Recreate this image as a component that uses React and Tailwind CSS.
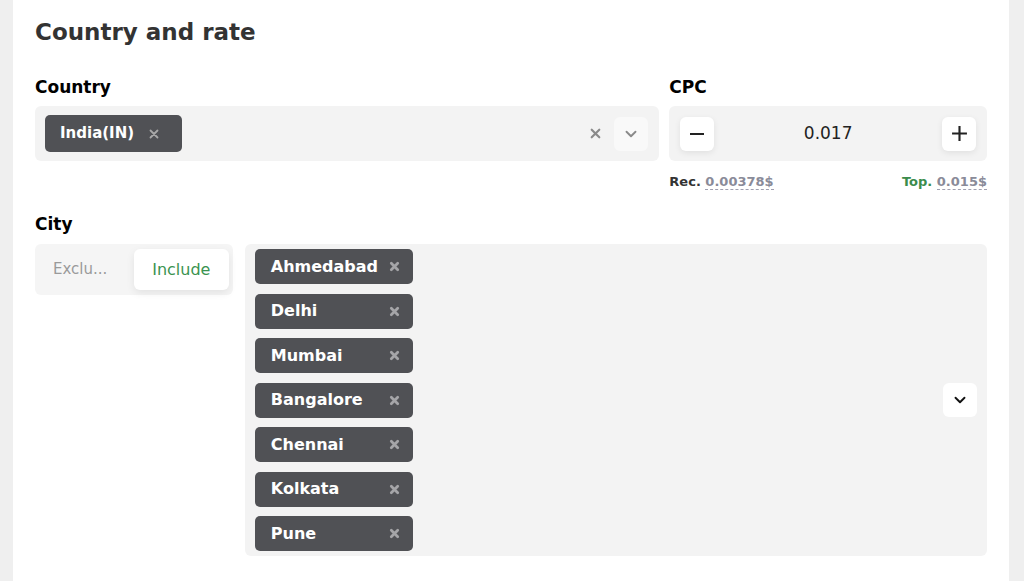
import React from 'react';

const CITIES = ['Ahmedabad', 'Delhi', 'Mumbai', 'Bangalore', 'Chennai', 'Kolkata', 'Pune'];

function Chevron({ className }) {
  return (
    <svg viewBox="0 0 24 24" className={className} fill="none" stroke="currentColor" strokeWidth="2.5" strokeLinecap="round" strokeLinejoin="round">
      <path d="M6 9l6 6 6-6" />
    </svg>
  );
}

function Cross({ className, width = 2 }) {
  return (
    <svg viewBox="0 0 12 12" className={className} fill="none" stroke="currentColor" strokeWidth={width} strokeLinecap="round">
      <path d="M2.5 2.5l7 7M9.5 2.5l-7 7" />
    </svg>
  );
}

export default function App() {
  return (
    <div className="w-[1024px] h-[581px] bg-[#efefef] overflow-hidden" style={{ fontFamily: '"DejaVu Sans", sans-serif' }}>
      <div className="ml-[13px] w-[996px] h-full bg-white px-[22px] pt-[16px]">
        <h1 className="text-[23px] font-bold text-[#333] leading-[32px]">Country and rate</h1>

        <div className="mt-[27px] flex gap-[10px]">
          {/* Country */}
          <div className="w-[625px]">
            <div className="text-[17px] font-bold text-black leading-[24px] h-[24px]">Country</div>
            <div className="mt-[7px] h-[55px] bg-[#f3f3f3] rounded-[6px] flex items-center pl-[10px] pr-[11px]">
              <div className="h-[37px] pl-[15px] pr-[22px] bg-[#505155] rounded-[5px] flex items-center gap-[14px]">
                <span className="text-white text-[15px] font-bold">India(IN)</span>
                <Cross className="w-[12px] h-[12px] text-[#a8a8a8]" width={1.8} />
              </div>
              <div className="flex-1" />
              <Cross className="w-[13px] h-[13px] text-[#8a8a8a] mr-[12px]" width={2} />
              <div className="w-[34px] h-[34px] bg-[#f9f9f9] rounded-[6px] flex items-center justify-center">
                <Chevron className="w-[18px] h-[18px] text-[#8a8a8a]" />
              </div>
            </div>
          </div>

          {/* CPC */}
          <div className="w-[318px]">
            <div className="text-[17px] font-bold text-black leading-[24px] h-[24px]">CPC</div>
            <div className="mt-[7px] h-[55px] bg-[#f3f3f3] rounded-[6px] flex items-center px-[11px]">
              <div className="w-[34px] h-[34px] bg-white rounded-[6px] shadow-[0_2px_6px_rgba(0,0,0,0.08)] flex items-center justify-center">
                <div className="w-[14px] h-[2px] bg-[#222]" />
              </div>
              <div className="flex-1 text-center text-[17px] text-[#222]">0.017</div>
              <div className="w-[34px] h-[34px] bg-white rounded-[6px] shadow-[0_2px_6px_rgba(0,0,0,0.08)] flex items-center justify-center">
                <svg viewBox="0 0 16 16" className="w-[17px] h-[17px]" stroke="#222" strokeWidth="2">
                  <path d="M8 1v14M1 8h14" />
                </svg>
              </div>
            </div>
            <div className="mt-[12px] flex justify-between text-[13px] font-bold leading-[18px]">
              <div>
                <span className="text-[#333]">Rec.</span>{' '}
                <span className="text-[#8a8b99] border-b border-dashed border-[#a0a0b0]">0.00378$</span>
              </div>
              <div>
                <span className="text-[#3b8c4c]">Top.</span>{' '}
                <span className="text-[#8a8b99] border-b border-dashed border-[#a0a0b0]">0.015$</span>
              </div>
            </div>
          </div>
        </div>

        {/* City */}
        <div className="mt-[21px] text-[17px] font-bold text-black leading-[24px] h-[24px]">City</div>
        <div className="mt-[8px] flex gap-[12px] items-start">
          <div className="w-[198px] h-[51px] bg-[#f5f5f5] rounded-[6px] flex items-center pl-[18px] pr-[4px]">
            <span className="flex-1 text-[15px] text-[#9a9a9a]">Exclu...</span>
            <div className="w-[95px] h-[41px] bg-white rounded-[6px] shadow-[0_3px_8px_rgba(0,0,0,0.08)] flex items-center justify-center text-[16px] text-[#3a9350]">
              Include
            </div>
          </div>

          <div className="w-[743px] h-[312px] bg-[#f3f3f3] rounded-[6px] flex items-center pl-[10px] pr-[10px]">
            <div className="flex flex-col gap-[9.5px] self-start pt-[5px]">
              {CITIES.map((c) => (
                <div key={c} className="w-[158px] h-[35px] bg-[#505155] rounded-[5px] flex items-center pl-[16px] pr-[13px]">
                  <span className="flex-1 text-white text-[16px] font-bold">{c}</span>
                  <Cross className="w-[11px] h-[11px] text-[#a5a5a8]" width={3} />
                </div>
              ))}
            </div>
            <div className="flex-1" />
            <div className="w-[34px] h-[34px] bg-white rounded-[6px] flex items-center justify-center">
              <Chevron className="w-[18px] h-[18px] text-[#111]" />
            </div>
          </div>
        </div>
      </div>
    </div>
  );
}
